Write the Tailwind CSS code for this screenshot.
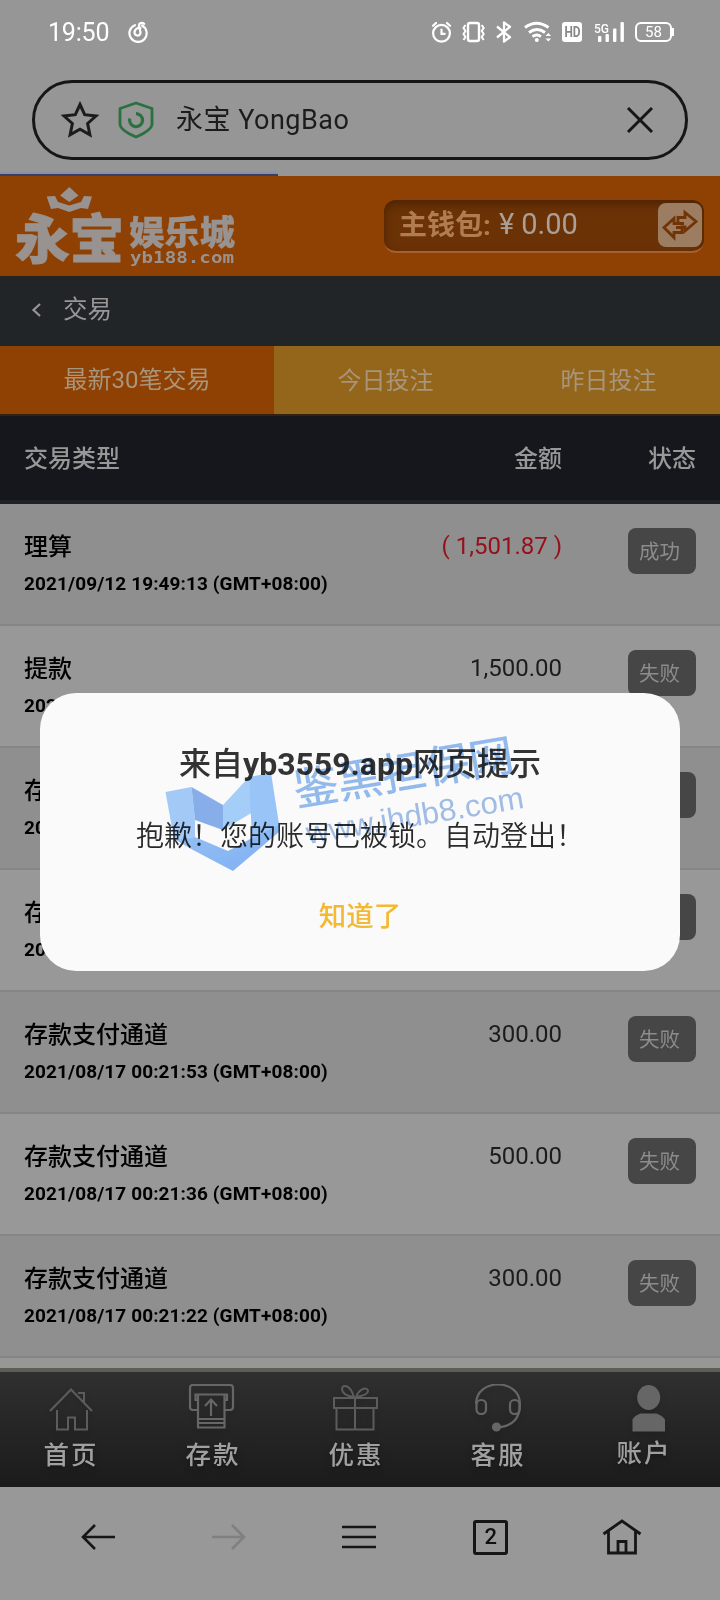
<!DOCTYPE html>
<html lang="zh-CN">
<head>
<meta charset="utf-8">
<meta name="viewport" content="width=720">
<title>永宝 YongBao</title>
<script src="https://cdn.jsdelivr.net/npm/@tailwindcss/browser@4"></script>
</head>
<body class="bg-[#969696]">
<div class="relative w-[720px] h-[1600px] overflow-hidden flex flex-col bg-[#969696] font-[Roboto,'Noto_Sans_CJK_SC',sans-serif]">

  <!-- Status bar -->
  <div class="h-16 shrink-0 flex items-center pl-12 pr-[46px] text-white">
    <span class="w-[62px] text-[25px] leading-none tracking-[-0.2px] whitespace-nowrap">19:50</span>
    <svg class="ml-[18px] w-5 h-6" viewBox="128 20 20 24" fill="none" stroke="#fff" stroke-width="2.2" stroke-linecap="round"><path d="M135 25.2A8.6 8.6 0 1 0 142 25.6M144.2 23.8C142 22 138.5 23 139 26l1.5 6.2a3 3 0 1 1-5.8-.7c.3-2.6 3-4 5.7-3.5"/></svg>
    <div class="ml-auto flex items-center h-6">
      <svg class="w-5 h-6" viewBox="432 20 20 24" fill="none" stroke="#fff" stroke-width="2.200" stroke-linecap="round"><circle cx="441.5" cy="33.3" r="8.4"/><path d="M441.5 29.5v4.3h3.2M433 25.8l3-2.8M450 25.8l-3-2.8"/></svg>
      <svg class="ml-[9px] w-6 h-6" viewBox="461 20 24 24" fill="none" stroke="#fff" stroke-width="2.400"><rect x="468" y="23" width="11" height="18" rx="2"/><path d="M465.5 25l-2 3 2 3-2 3 2 3-2 3M481.7 25l2 3-2 3 2 3-2 3 2 3" stroke-width="2"/></svg>
      <svg class="ml-[11px] w-4 h-6" viewBox="496 20 16 24" fill="none" stroke="#fff" stroke-width="2.300" stroke-linejoin="round"><path d="M497 26.5l13 10.7-6 4.3V22.5l6 4.3-13 10.7"/></svg>
      <svg class="ml-3 w-7 h-6" viewBox="524 20 28 24" fill="none" stroke="#fff" stroke-width="2.9"><path d="M525 27.5q11.5-8.500 23.5 0M529 32.5q8-6 16 0M532.5 36.6q4.2-3 8.4 0"/><circle cx="536.8" cy="40" r="2" fill="#fff" stroke="none"/><path d="M545.5 36l2.8-3 2.8 3zM545.5 38.5l2.8 3 2.8-3z" fill="#fff" stroke="none"/></svg>
      <div class="ml-2.5 w-5 h-5 rounded-[3px] bg-white text-[#888] text-[14px] leading-5 font-bold flex justify-center items-center"><span class="scale-x-[.85]">HD</span></div>
      <svg class="ml-3 w-[31px] h-6" viewBox="594 20 31 24" fill="#fff"><text x="594" y="32.5" font-size="12" textLength="15" lengthAdjust="spacingAndGlyphs" font-family="Roboto" font-weight="500">5G</text><rect x="598" y="36" width="3.400" height="6" rx="1"/><rect x="605.500" y="34" width="3.400" height="8" rx="1"/><rect x="613" y="28.500" width="3.400" height="13.500" rx="1"/><rect x="620.500" y="22" width="3.400" height="20" rx="1"/></svg>
      <div class="ml-[10px] w-[37px] h-5 rounded-md border-2 border-white text-[15px] leading-none flex items-center justify-center">58</div>
      <div class="w-[2px] h-[8px] bg-white"></div>
    </div>
  </div>

  <!-- Address bar -->
  <div class="mt-4 mx-8 h-20 shrink-0 rounded-full border-[3px] border-[#161616] flex items-center pl-[26px] pr-[31px]">
    <svg class="w-[38px] h-[38px]" viewBox="61 101 38 38" fill="none" stroke="#1c1c1c" stroke-width="3"><path d="M80 104.500l4.700 10.200 11.300 1.300-8.400 7.500 2.300 11.300-9.900-5.500-9.900 5.500 2.300-11.300-8.400-7.500 11.300-1.300z"/></svg>
    <svg class="ml-[18px] w-[38px] h-[38px]" viewBox="117 101 38 38" fill="none" stroke="#2a7140" stroke-linejoin="round"><path d="M136 103l16 5.500v15.500q0 6-16 13-16-7-16-13v-15.500z" stroke-width="2.800"/><path d="M136 113.700a6.500 6.500 0 1 1-6.200 4.800" stroke-width="3.200"/></svg>
    <span class="ml-[21px] text-[27px] leading-none tracking-[0.500px] text-[#1c1c1c] whitespace-nowrap">永宝 YongBao</span>
    <svg class="ml-auto w-7 h-7" viewBox="0 0 28 28" stroke="#161616" stroke-width="3"><path d="M2 2l24 24M26 2L2 26"/></svg>
  </div>
  <div class="mt-3 h-1 shrink-0 w-[278px] bg-[#8791a6] border-b-2 border-[#383e66]"></div>

  <!-- Site header -->
  <header class="h-[100px] shrink-0 bg-[#8f4104] flex items-center pl-2.5 pr-4">
    <svg class="w-[230px] h-[96px]" viewBox="10 178 230 96" fill="#989390">
      <path d="M69.300 187l9.200 8.500-9.200 6.500-9.200-6.500zM46.700 196.500l8.300-.5 3 6 11.300 3.500 11.700-3.500 3-6 8 .5-4 12.500-7-1-11.700 4-11.300-4-7 1z"/>
      <g font-family="Noto Sans CJK SC" font-weight="900" stroke="#989390">
        <text x="15" y="259" font-size="53" stroke-width="1" textLength="109" lengthAdjust="spacingAndGlyphs">永宝</text>
        <text x="129" y="245" font-size="34" stroke-width=".3" textLength="106" lengthAdjust="spacingAndGlyphs">娱乐城</text>
      </g>
      <text x="130" y="263" font-size="15" font-family="DejaVu Sans Mono" font-weight="700" textLength="104" lengthAdjust="spacingAndGlyphs">yb188.com</text>
    </svg>
    <div class="ml-auto w-[320px] h-[53px] rounded-[12px] bg-[#6b3206] border-b-2 border-[#a5602b] flex items-center pl-[15px] pr-0.5 shadow-[inset_0_4px_8px_#4c2402]">
      <span class="text-[28px] leading-none font-bold text-[#b17d50] whitespace-nowrap mt-px">主钱包:</span>
      <span class="ml-2 text-[29px] leading-none text-[#aaa09a] whitespace-nowrap -mt-px">¥ 0.00</span>
      <svg class="ml-auto w-11 h-11 rounded-lg bg-[#9d7d62]" viewBox="0 0 44 44" fill="none" stroke="#713406" stroke-width="2.800"><path d="M6 24.500L16 15.500V20.500H20V14.500H27V9.500L38 18.500 27 28V24H24V29.500H16V34.500zM19 20.500h7M18 24.500h7"/></svg>
    </div>
  </header>

  <!-- Page title -->
  <div class="h-[70px] shrink-0 bg-[#212528] flex items-center pl-[31px] text-[#979797]">
    <svg class="w-[11px] h-4 -mt-0.5" viewBox="0 0 11 16" fill="none" stroke="#979797" stroke-width="2.200"><path d="M9 2L2.500 8 9 14"/></svg>
    <h1 class="ml-[21px] -mt-px text-[24.500px] leading-none">交易</h1>
  </div>

  <!-- Tabs -->
  <div class="h-[70px] shrink-0 flex text-[24px] text-[#a8957b] bg-[#93661b] border-b-2 border-[#35210f]">
    <div class="w-[274px] bg-[#8f4104] flex items-center justify-center">最新30笔交易</div>
    <div class="w-[223px] flex items-center justify-center pt-px">今日投注</div>
    <div class="w-[223px] flex items-center justify-center pt-px">昨日投注</div>
  </div>

  <!-- Column heads -->
  <div class="h-[88px] shrink-0 bg-[#15171c] border-b-4 border-[#1f2125] flex items-center px-6 pt-px text-[24px] font-medium text-[#989898]">
    <span class="flex-1">交易类型</span><span>金额</span><span class="w-[134px] text-right">状态</span>
  </div>

  <!-- Transactions -->
  <main id="rows" class="shrink-0"></main>
  <template id="row">
    <div class="h-[122px] border-b-2 border-[#858585] flex px-6 pt-6 odd:bg-[#8f8f8f] even:bg-[#989898]">
      <div class="flex-1">
        <div data-f="type" class="pt-px text-[24px] leading-9 font-medium text-black"></div>
        <div data-f="time" class="mt-1 text-[19px] leading-[30px] tracking-[0.100px] font-bold text-black whitespace-nowrap"></div>
      </div>
      <div data-f="amount" class="text-[24px] leading-9 text-[#1c1c1c]"></div>
      <div data-f="state" class="ml-[66px] w-[68px] h-[46px] rounded-lg bg-[#464646] pl-[11px] text-[20.500px] leading-[48px] text-[#8c8c8c] whitespace-nowrap"></div>
    </div>
  </template>
  <div class="h-2.5 shrink-0 bg-[#979896]"></div>

  <!-- Site tab bar -->
  <nav class="h-[119px] shrink-0 border-t-4 border-[#5d5e58] bg-linear-to-b from-[#303030] to-[#1b1b1b] flex text-[25.500px] tracking-[2px] font-medium text-[#a0a0a0] text-shadow-lg">
    <div class="w-[142px] flex flex-col items-center pt-3">
      <svg class="w-12 h-12 drop-shadow-md" viewBox="47 1384 48 48" fill="none" stroke="#5c5c5c" stroke-width="2"><path d="M50 1411l21-21.500 21 21.500M57 1410v19.500h11v-12h7v12h12V1410M78 1393h6v9"/></svg>
      <span class="leading-[47px]">首页</span>
    </div>
    <div class="w-[142px] flex flex-col items-center pt-3">
      <svg class="w-12 h-12 -ml-[5px] drop-shadow-md" viewBox="187 1384 48 48" fill="none" stroke="#666" stroke-width="2.200"><path d="M198 1410h-5q-3 0-3-3v-19q0-3 3-3h37q3 0 3 3v19q0 3-3 3h-5M198 1400h-2.500v-5.500h31.500v5.500h-2.500M198 1395v32.500h26.500V1395M198 1419h26M198 1423h26M211 1416v-16.500M205 1406l6-6.500 6 6.500"/></svg>
      <span class="leading-[47px]">存款</span>
    </div>
    <div class="w-[142px] flex flex-col items-center pt-3">
      <svg class="w-12 h-12 drop-shadow-md" viewBox="331 1384 48 48" fill="none" stroke="#5c5c5c" stroke-width="2"><path d="M334 1398h43v10h-43zM336.500 1408v21.500h37V1408M355 1398v31.500M354 1397c-7-1-12-4-12-8 0-5 8-5 12 8zM356 1397c7-1 12-3 12-6 0-4-8-4-12 6z"/></svg>
      <span class="ml-0.5 leading-[47px]">优惠</span>
    </div>
    <div class="w-[142px] flex flex-col items-center pt-3">
      <svg class="ml-0.5 w-12 h-12 drop-shadow-md" viewBox="474 1384 48 48" fill="none" stroke="#666" stroke-width="2.200"><path d="M476 1404c0-26 44-26 44 0 0 13-6 22-22 23.500"/><rect x="476.500" y="1400" width="9.500" height="14" rx="4.500"/><rect x="510" y="1400" width="9.500" height="14" rx="4.500"/><circle cx="496.500" cy="1427" r="3.500" fill="#666"/></svg>
      <span class="ml-0.5 leading-[47px]">客服</span>
    </div>
    <div class="w-[152px] flex flex-col items-center pt-3">
      <svg class="ml-[9px] w-12 h-12 drop-shadow-md" viewBox="625 1384 48 48" fill="#666"><ellipse cx="648.700" cy="1397.500" rx="11.500" ry="12.500"/><path d="M632.500 1431.500v-12q2-4 8-6h16q6 2 8.500 6v12z"/></svg>
      <span class="leading-[43px]">账户</span>
    </div>
  </nav>

  <!-- Browser tool bar -->
  <div class="h-[113px] shrink-0 bg-[#989898] flex items-center pl-20 pr-[78px] pb-[13px] justify-between">
    <svg class="w-[36px] h-9" viewBox="80 1519 36 36" fill="none" stroke="#161616" stroke-width="2.600"><path d="M115 1537H83M95 1525l-12 12 12 12"/></svg>
    <svg class="w-[36px] h-9" viewBox="211 1519 36 36" fill="none" stroke="#808080" stroke-width="2.600"><path d="M212 1537h32M232 1525l12 12-12 12"/></svg>
    <svg class="w-[36px] h-9" viewBox="342 1519 36 36" stroke="#161616" stroke-width="2.600"><path d="M342 1527h34M342 1537h34M342 1547h34"/></svg>
    <div class="relative left-px w-[35px] h-[35px] rounded-[3px] border-[3px] border-[#161616] flex items-center justify-center text-[22px] leading-none font-medium text-[#111]">2</div>
    <svg class="w-[40px] h-9" viewBox="602 1518 40 36" fill="none" stroke="#161616" stroke-width="2.800"><path d="M603.500 1533l18.500-13 18.500 13M608.500 1530v22h27v-22M618 1552v-11.500h8v11.500"/></svg>
  </div>

  <!-- Alert dialog -->
  <div class="absolute left-10 top-[693px] w-[640px] h-[278px] rounded-[36px] bg-[#fafafa] flex flex-col items-center pt-[49px]">
    <div class="text-[32px] leading-[44px] font-medium text-[#333] whitespace-nowrap">来自<b class="font-bold">yb3559.app</b>网页提示</div>
    <div class="mt-[31px] text-[28px] leading-10 font-[350] text-[#2a2a2a] whitespace-nowrap">抱歉！您的账号已被锁。自动登出！</div>
    <div class="mt-10 text-[27.500px] leading-10 font-medium text-[#f3b934]">知道了</div>
    <svg class="absolute left-0 top-0 w-[640px] h-[278px] mix-blend-multiply" viewBox="40 693 640 278">
      <defs><linearGradient id="g" x1="0" y1="0" x2="1" y2="1"><stop offset="0" stop-color="#7fb6f7"/><stop offset="1" stop-color="#5e9ef8"/></linearGradient></defs>
      <g opacity=".78">
        <path d="M165.500 792l26-5 3.500 33 0 17-21 2z" fill="#8dbffb"/>
        <path d="M191.500 787l31.500 18v25l-28-10z" fill="#6b9dea"/>
        <path d="M223 805l26-28 4 35-30 18z" fill="#8fc4fc"/>
        <path d="M249 777l22-4 8 51-27 14z" fill="#7fb9fc"/>
        <path d="M174 839l21-2 33 14 24-13 27-14v8l-46 39-40-21z" fill="url(#g)"/>
      </g>
      <text x="297" y="806" font-size="44" textLength="222" lengthAdjust="spacingAndGlyphs" transform="rotate(-9.500 298 808)" font-family="Noto Sans CJK SC" fill="#6ea5ec" fill-opacity=".72" stroke="#6ea5ec" stroke-opacity=".4" stroke-width=".8">鉴黑担保网</text>
      <text x="308" y="844" font-size="31" textLength="220" lengthAdjust="spacingAndGlyphs" transform="rotate(-9.500 308 844)" font-family="Liberation Sans" fill="#7fa8e0" fill-opacity=".72">www.jhdb8.com</text>
    </svg>
  </div>
</div>

<script>
  const items = [
    ['理算', '2021/09/12 19:49:13 (GMT+08:00)', '( 1,501.87 )', '成功'],
    ['提款', '2021/09/12 19:48:00 (GMT+08:00)', '1,500.00', '失败'],
    ['存款支付通道', '2021/08/17 00:23:00 (GMT+08:00)', '300.00', '失败'],
    ['存款支付通道', '2021/08/17 00:22:00 (GMT+08:00)', '300.00', '失败'],
    ['存款支付通道', '2021/08/17 00:21:53 (GMT+08:00)', '300.00', '失败'],
    ['存款支付通道', '2021/08/17 00:21:36 (GMT+08:00)', '500.00', '失败'],
    ['存款支付通道', '2021/08/17 00:21:22 (GMT+08:00)', '300.00', '失败']
  ];
  const tpl = document.getElementById('row');
  for (const [type, time, amount, state] of items) {
    const n = tpl.content.cloneNode(true);
    const set = (k, v) => { n.querySelector(`[data-f=${k}]`).textContent = v; };
    set('type', type); set('time', time); set('amount', amount); set('state', state);
    if (amount.startsWith('(')) n.querySelector('[data-f=amount]').classList.replace('text-[#1c1c1c]', 'text-[#960f19]');
    document.getElementById('rows').append(n);
  }
</script>
</body>
</html>
